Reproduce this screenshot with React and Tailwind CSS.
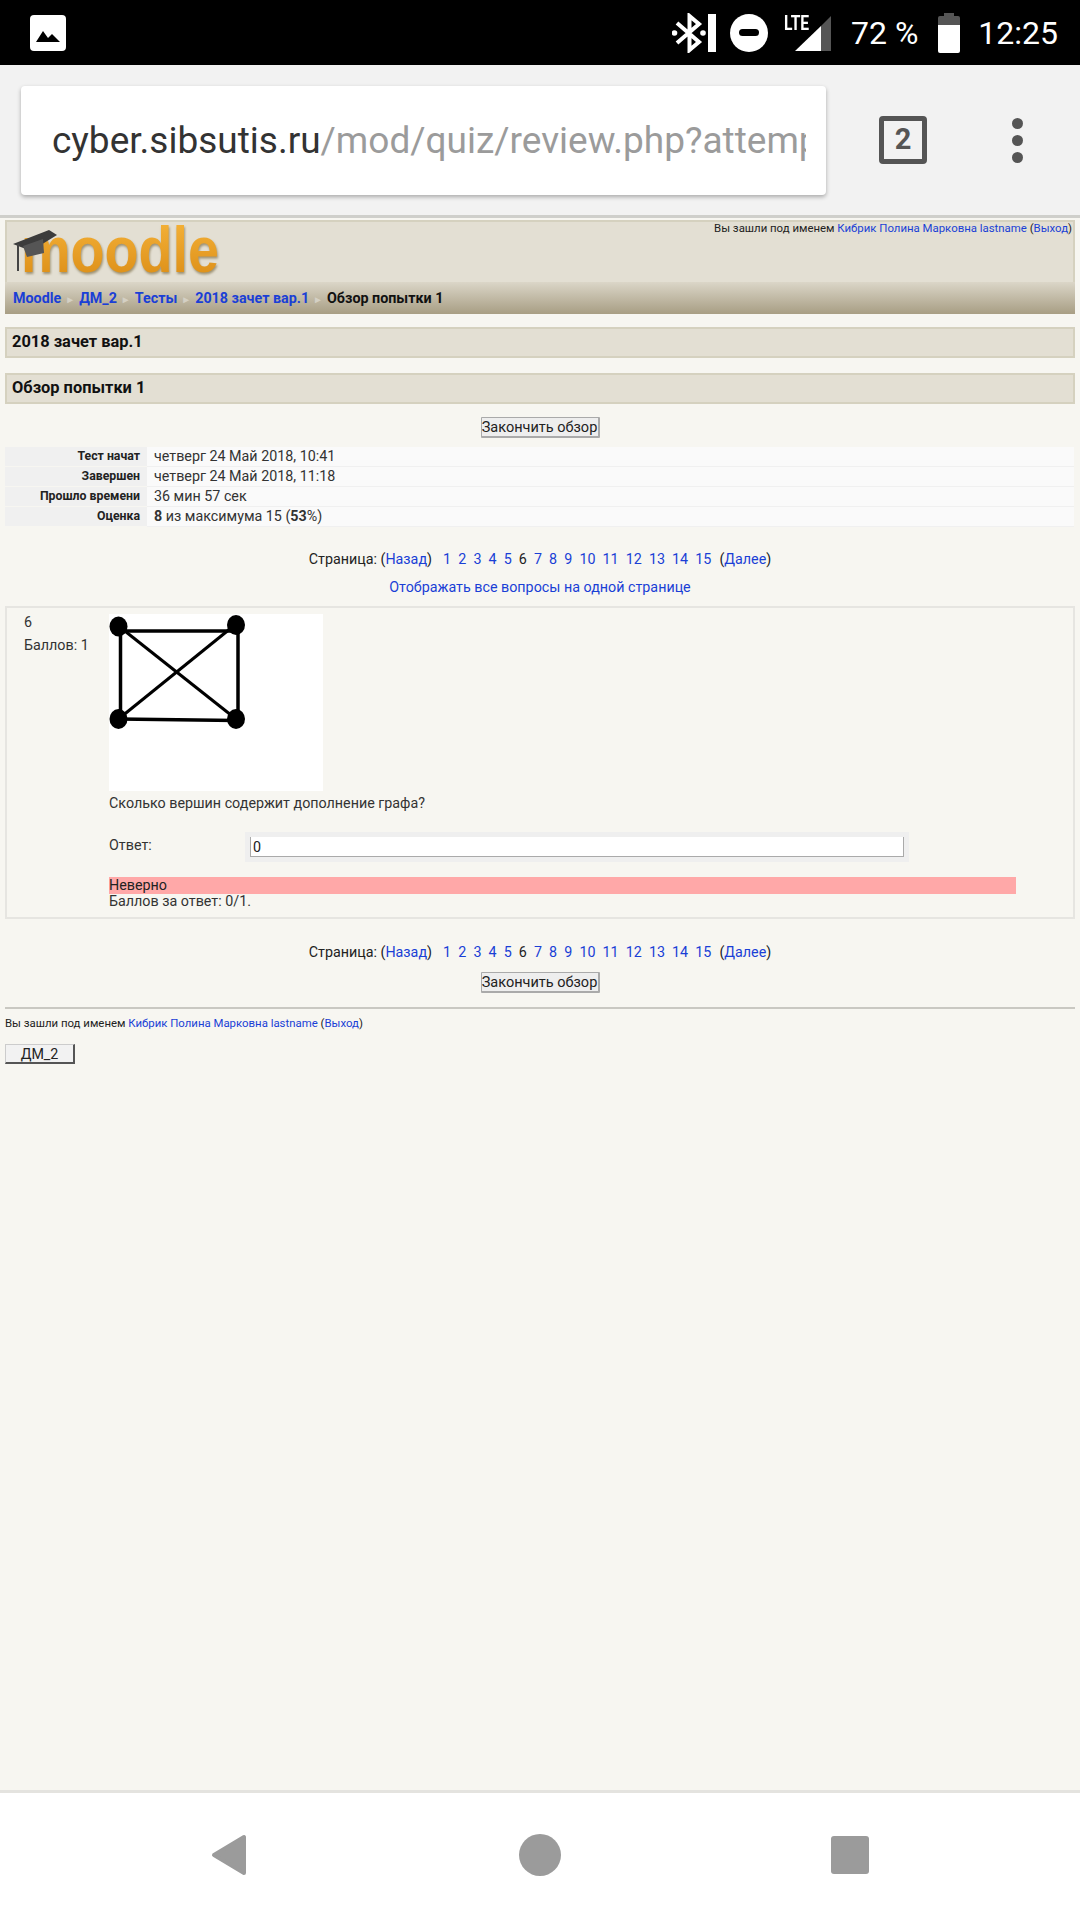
import React from "react";

const link = "text-[#1a3fd6]";
const pages = [1, 2, 3, 4, 5, 6, 7, 8, 9, 10, 11, 12, 13, 14, 15];

function StatusBar() {
    return (
        <div className="h-[65px] bg-black flex items-center text-white shrink-0">
            <svg width="36" height="36" viewBox="0 0 36 36" className="ml-[30px]">
                <rect x="0" y="0" width="36" height="36" rx="4" fill="#fff" />
                <path d="M6 27 L13 16 L18 23 L22 19 L30 27 Z" fill="#000" />
            </svg>
            <div className="flex-1" />
            <svg width="44" height="40" viewBox="0 0 44 40" className="mr-[14px]">
                <path d="M5 10 L27 29 L17.5 37 V3 L27 11 L5 30" fill="none" stroke="#fff" strokeWidth="4" />
                <circle cx="2.5" cy="20" r="2.8" fill="#fff" />
                <circle cx="31" cy="20" r="2.8" fill="#fff" />
                <rect x="36" y="1" width="8" height="38" fill="#fff" />
            </svg>
            <div className="w-[38px] h-[38px] rounded-full bg-white flex items-center justify-center mr-[16px]">
                <div className="w-[20px] h-[7px] rounded-full bg-black" />
            </div>
            <div className="relative w-[47px] h-[40px] mr-[20px]">
                <svg width="47" height="40" viewBox="0 0 47 40">
                    <path d="M11 38 L37 13 V38 Z" fill="#fff" />
                    <path d="M37 13 L47 3 V38 H37 Z" fill="#555" />
                </svg>
                <span className="absolute left-0 top-0 text-[20px] font-bold leading-[20px] scale-x-[0.78] origin-left font-['Roboto',sans-serif]">LTE</span>
            </div>
            <span className="text-[32px] font-['Roboto',sans-serif] mr-[20px]">72 %</span>
            <div className="w-[22px] h-[40px] flex flex-col items-center mr-[18px]">
                <div className="w-[10px] h-[3px] bg-[#555]" />
                <div className="w-full h-[9px] bg-[#555] rounded-t-[2px]" />
                <div className="w-full flex-1 bg-white rounded-b-[2px]" />
            </div>
            <span className="text-[32px] font-['Roboto',sans-serif] mr-[22px]">12:25</span>
        </div>
    );
}

function Toolbar() {
    return (
        <div className="h-[153px] bg-[#f2f2f2] border-b-[3px] border-[#cfcfcb] flex items-center shrink-0 font-['Roboto',sans-serif]">
            <div className="ml-[21px] w-[805px] h-[109px] bg-white rounded-[4px] shadow-[0_2px_4px_rgba(0,0,0,0.3)] pl-[31px] pr-[20px] pt-[2px] flex items-center">
                <div className="overflow-hidden whitespace-nowrap text-[37px] text-[#9b9b9b]">
                    <span className="text-[#333]">cyber.sibsutis.ru</span>/mod/quiz/review.php?attempt=1234
                </div>
            </div>
            <div className="ml-[53px] w-[48px] h-[48px] border-[5px] border-[#555] rounded-[4px] flex items-center justify-center text-[29px] font-bold text-[#555]">2</div>
            <div className="ml-[85px] flex flex-col gap-[6px]">
                <div className="w-[11px] h-[11px] rounded-full bg-[#555]" />
                <div className="w-[11px] h-[11px] rounded-full bg-[#555]" />
                <div className="w-[11px] h-[11px] rounded-full bg-[#555]" />
            </div>
        </div>
    );
}

function Logo() {
    return (
        <div className="relative w-[230px] h-[59px]">
            <span className="absolute left-[14px] top-[-9px] text-[64px] leading-[74px] font-bold scale-x-[0.87] origin-left font-['Liberation_Sans',sans-serif] bg-gradient-to-b from-[#f7b63a] to-[#d98a10] bg-clip-text text-transparent drop-shadow-[1px_2px_1px_rgba(90,70,20,0.5)]">moodle</span>
            <svg width="50" height="50" viewBox="0 0 50 50" className="absolute left-[4px] top-[5px]">
                <path d="M2 17 L38 3 L46 8 L20 24 Z" fill="#3c3c3c" />
                <path d="M12 19 L32 12 L33 26 L16 30 Z" fill="#555" />
                <path d="M7 17 V44" stroke="#444" strokeWidth="2" />
            </svg>
        </div>
    );
}

function Sep() {
    return <span className="text-[#d4d0c4] text-[10px] mx-[4px]">►</span>;
}

function Pager() {
    return (
        <div className="flex justify-center text-[14.3px] leading-[20px] text-[#222] gap-[7.1px]">
            <span className="mr-[4px]">Страница: (<span className={link}>Назад</span>)</span>
            {pages.map(p => (
                <span key={p} className={p === 6 ? "text-[#222]" : link}>{p}</span>
            ))}
            <span className="ml-[1px]">(<span className={link}>Далее</span>)</span>
        </div>
    );
}

function Btn() {
    return (
        <div className="flex justify-center">
            <button className="h-[21px] w-[119px] border border-[#aaa] border-b-2 border-r-2 bg-[#eee] text-[14.5px] leading-[17px] text-[#222] rounded-[1px]">Закончить обзор</button>
        </div>
    );
}

function Graph() {
    return (
        <svg width="214" height="177" viewBox="0 0 214 177" className="block bg-white">
            <g stroke="#000" strokeWidth="3.5" fill="none">
                <path d="M11.5 12 V105" />
                <path d="M129 10 V105" />
                <path d="M9.5 17 H127" />
                <path d="M9.5 105 L127 106.5" />
                <path d="M9.5 12 L127 105" strokeWidth="3" />
                <path d="M127 10 L9.5 105" strokeWidth="3" />
            </g>
            <ellipse cx="9.5" cy="12.5" rx="9" ry="10" fill="#000" />
            <ellipse cx="127" cy="11" rx="9" ry="10" fill="#000" />
            <ellipse cx="9.5" cy="105" rx="9" ry="10" fill="#000" />
            <ellipse cx="127" cy="105" rx="9" ry="10" fill="#000" />
        </svg>
    );
}

const rows = [
    ["Тест начат", <>четверг 24 Май 2018, 10:41</>],
    ["Завершен", <>четверг 24 Май 2018, 11:18</>],
    ["Прошло времени", <>36 мин 57 сек</>],
    ["Оценка", <><b>8</b> из максимума 15 (<b>53</b>%)</>],
];

export default function App() {
    return (
        <div className="w-[1080px] h-[1920px] flex flex-col bg-[#f7f6f1] font-['Roboto',sans-serif] overflow-hidden">
            <StatusBar />
            <Toolbar />

            <main className="flex-1 px-[5px] pt-[2px]">
                <div className="border-2 border-b-0 border-[#d5d1bf] bg-[#e3dfd3] h-[62px] flex justify-between">
                    <Logo />
                    <div className="text-[11.4px] leading-[13px] text-[#222] pr-[1px]">
                        Вы зашли под именем <span className={link}>Кибрик Полина Марковна lastname</span> (<span className={link}>Выход</span>)
                    </div>
                </div>
                <div className="h-[32px] bg-gradient-to-b from-[#dbd6c8] to-[#a89e84] flex items-center pl-[8px] pt-[2px] text-[14.3px] font-bold">
                    <span className={link}>Moodle</span><Sep />
                    <span className={link}>ДМ_2</span><Sep />
                    <span className={link}>Тесты</span><Sep />
                    <span className={link}>2018 зачет вар.1</span><Sep />
                    <span className="text-[#111]">Обзор попытки 1</span>
                </div>

                <h2 className="mt-[13px] h-[31px] border-2 border-[#d5d1bf] bg-[#e3dfd3] flex items-center pl-[5px] text-[16.4px] font-bold text-[#111]">2018 зачет вар.1</h2>
                <h2 className="mt-[15px] h-[31px] border-2 border-[#d5d1bf] bg-[#e3dfd3] flex items-center pl-[5px] text-[16.4px] font-bold text-[#111]">Обзор попытки 1</h2>

                <div className="mt-[13px]"><Btn /></div>

                <div className="mt-[9px] mr-[1px]">
                    {rows.map(([label, value]) => (
                        <div key={label} className="flex h-[20px] items-center">
                            <div className="w-[142px] h-full bg-[#f0f0f0] border-b border-[#f7f6f1] text-right pr-[7px] text-[12.3px] leading-[19px] font-bold text-[#222]">{label}</div>
                            <div className="flex-1 h-full bg-[#fafafa] border-b border-[#f0f0f0] pl-[7px] text-[14.3px] leading-[19px] text-[#333]">{value}</div>
                        </div>
                    ))}
                </div>

                <div className="mt-[22px]"><Pager /></div>
                <div className={"mt-[8px] text-center text-[14.3px] leading-[20px] " + link}>Отображать все вопросы на одной странице</div>

                <div className="mt-[9px] h-[313px] border-2 border-[#e6e5e1] flex text-[14.3px] leading-[20px] text-[#333]">
                    <div className="w-[102px] pl-[17px] pt-[3px] shrink-0">
                        <div className="leading-[22px]">6</div>
                        <div className="mt-[2px]">Баллов: 1</div>
                    </div>
                    <div className="flex-1 pt-[6px]">
                        <Graph />
                        <div className="mt-[2px]">Сколько вершин содержит дополнение графа?</div>
                        <div className="mt-[19px] flex">
                            <div className="w-[136px] pt-[3px]">Ответ:</div>
                            <div className="w-[664px] h-[30px] bg-[#efefef] px-[5px] pt-[5px]">
                                <div className="h-[20px] bg-white border-l border-b border-r border-[#aaa] pl-[2px] text-[14.3px] leading-[20px] text-[#222]">0</div>
                            </div>
                        </div>
                        <div className="mt-[15px] w-[907px] h-[17px] bg-[#ffa8a8] leading-[17px] text-[#222]">Неверно</div>
                        <div className="leading-[15px]">Баллов за ответ: 0/1.</div>
                    </div>
                </div>

                <div className="mt-[23px]"><Pager /></div>
                <div className="mt-[10px]"><Btn /></div>

                <div className="mt-[14px] h-[2px] bg-[#c9c8c2]" />
                <div className="mt-[7px] text-[11.4px] leading-[14px] text-[#222]">
                    Вы зашли под именем <span className={link}>Кибрик Полина Марковна lastname</span> (<span className={link}>Выход</span>)
                </div>
                <button className="block mt-[14px] w-[70px] h-[20px] bg-[#f2f2f2] border-t border-l border-[#ccc] border-b-2 border-r-2 border-b-[#555] border-r-[#555] text-[14.3px] leading-[16px] text-[#222]">ДМ_2</button>
            </main>

            <div className="h-[130px] bg-white border-t-[3px] border-[#e4e3df] flex items-center shrink-0 pb-[4px]">
                <svg width="36" height="42" viewBox="0 0 36 42" className="ml-[211px]">
                    <path d="M33 3 V39 L3 21 Z" fill="#9b9b9b" stroke="#9b9b9b" strokeWidth="4" strokeLinejoin="round" />
                </svg>
                <div className="ml-[272px] w-[42px] h-[42px] rounded-full bg-[#9b9b9b]" />
                <div className="ml-[270px] w-[38px] h-[38px] rounded-[3px] bg-[#9b9b9b]" />
            </div>
        </div>
    );
}
